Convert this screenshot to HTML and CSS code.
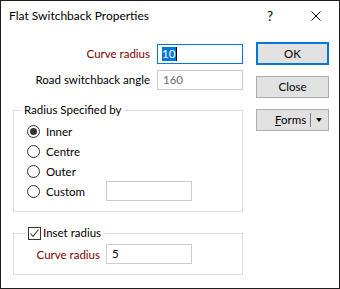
FILE: index.html
```
<!DOCTYPE html>
<html>
<head>
<meta charset="utf-8">
<link rel="stylesheet" href="styles.css">
</head>
<body>
<div class="win">
  <div class="titlebar">
    <span class="title">Flat Switchback Properties</span>
    <span class="cap help">?</span>
    <span class="cap close"><svg width="10" height="10" viewBox="0 0 10 10"><path d="M0.5 0.5 L9.5 9.5 M9.5 0.5 L0.5 9.5" stroke="#000" stroke-width="1" fill="none"/></svg></span>
  </div>
  <div class="content">
    <div class="main">
      <div class="fields">
        <span class="lbl req">Curve radius</span>
        <div class="input focus"><span class="sel">10</span><span class="caret"></span></div>
        <span class="lbl">Road switchback angle</span>
        <div class="input ro">160</div>
      </div>
      <fieldset class="group g1">
        <legend class="legend">Radius Specified by</legend>
        <div class="radio-row"><span class="radio on"></span><span class="rlabel">Inner</span></div>
        <div class="radio-row"><span class="radio"></span><span class="rlabel">Centre</span></div>
        <div class="radio-row"><span class="radio"></span><span class="rlabel">Outer</span></div>
        <div class="radio-row"><span class="radio"></span><span class="rlabel">Custom</span><div class="input plain"></div></div>
      </fieldset>
      <fieldset class="group g2">
        <legend class="legend chk-legend"><span class="check"><svg width="11" height="11" viewBox="0 0 11 11"><path d="M1.5 5.5 L4 8.5 L9.5 1.5" stroke="#333" stroke-width="1.1" fill="none"/></svg></span><span>Inset radius</span></legend>
        <div class="inset-row"><span class="lbl2 req">Curve radius</span><div class="input plain val">5</div></div>
      </fieldset>
    </div>
    <div class="buttons">
      <div class="btn default">OK</div>
      <div class="btn">Close</div>
      <div class="btn split"><span class="split-text"><u>F</u>orms</span><span class="split-sep"></span><span class="split-arrow"></span></div>
    </div>
  </div>
</div>
</body>
</html>
```
FILE: styles.css
```
* { box-sizing: border-box; }
html, body { margin: 0; padding: 0; background: #fff; }
body { font-family: "Lato", "Noto Sans", sans-serif; font-size: 11.5px; color: #000; }
.win {
  width: 340px; height: 289px;
  border: 1px solid #1f1f1f;
  background: #fff;
  display: flex; flex-direction: column;
}
.titlebar { height: 31px; display: flex; align-items: center; flex: none; }
.title { flex: 1; padding-left: 8px; line-height: 16px; margin-top: -1px; font-size: 12px; }
.cap { width: 46px; height: 31px; display: flex; align-items: center; justify-content: center; }
.help { font-size: 13.5px; margin-top: -1px; }
.close svg { display: block; margin-top: -1px; }
.content { display: flex; padding: 10px 0 0 12px; }
.main { width: 230px; display: flex; flex-direction: column; }
.fields {
  display: grid; grid-template-columns: 137px 86px; column-gap: 7px; row-gap: 6px;
  margin-top: 2px;
}
.lbl { text-align: right; line-height: 20px; white-space: nowrap; }
.req { color: #800000; }
.input {
  height: 20px; width: 86px; border: 1px solid #cccccc; background: #fff;
  display: flex; align-items: center; padding-left: 4px; line-height: 16px;
}
.input.focus { border-color: #0078d7; }
.sel { background: #0078d7; color: #fff; line-height: 14px; padding: 0 1px 0 0; }
.caret { width: 1px; height: 14px; background: #000; }
.input.ro { color: #6d6d6d; padding-left: 5px; }
.group {
  margin: 0; padding: 0; border: 1px solid #dcdcdc; min-width: 0;
}
.legend { padding: 0 3px; line-height: 16px; }
.g1 { margin-top: 12px; padding: 3px 0 10px 13px; }
.g1 .legend { margin-left: -6px; }
.radio-row { height: 20px; display: flex; align-items: center; }
.radio {
  width: 13px; height: 13px; border: 1px solid #333; border-radius: 50%;
  display: flex; align-items: center; justify-content: center; flex: none;
}
.radio.on::after { content: ""; width: 7px; height: 7px; border-radius: 50%; background: #333; }
.rlabel { margin-left: 6px; width: 60px; }
.g2 { margin-top: 13px; padding: 3px 0 10px 0; }
.chk-legend { display: flex; align-items: center; margin-left: 12px; padding: 0 3px 0 2px; }
.check {
  width: 13px; height: 13px; border: 1px solid #333; display: flex; align-items: center; justify-content: center; margin-right: 2px;
}
.check svg { display: block; }
.inset-row { display: flex; align-items: center; }
.lbl2 { width: 92px; text-align: right; padding-right: 6px; white-space: nowrap; }
.val { padding-left: 5px; }
.buttons { margin-left: 13px; display: flex; flex-direction: column; gap: 11px; }
.btn {
  width: 73px; height: 22px; background: #e1e1e1; border: 1px solid #adadad;
  display: flex; align-items: center; justify-content: center; line-height: 16px;
}
.btn.default { border: 2px solid #0078d7; height: 23px; }
.btn.split { justify-content: flex-start; padding-left: 18px; }
.split-text { width: 29px; white-space: nowrap; }
.split-sep { width: 1px; height: 14px; background: #7a7a7a; margin-left: 6px; flex: none; }
.split-arrow {
  width: 0; height: 0; margin-left: 5px; flex: none;
  border-left: 3.5px solid transparent; border-right: 3.5px solid transparent; border-top: 4px solid #000;
}
```
